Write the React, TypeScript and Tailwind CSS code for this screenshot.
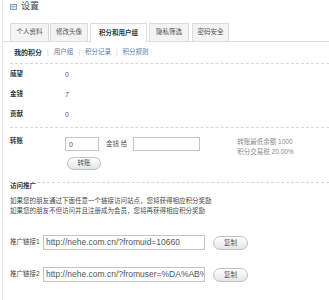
import { useState } from 'react'

const tabs = [
  { label: '个人资料', w: 'w-[39px]', ml: 'ml-0' },
  { label: '修改头像', w: 'w-[38px]', ml: 'ml-[1px]' },
  { label: '积分和用户组', w: 'w-[57px]', ml: 'ml-[2px]', active: true },
  { label: '隐私筛选', w: 'w-[40px]', ml: 'ml-[2px]' },
  { label: '密码安全', w: 'w-[37px]', ml: 'ml-[3px]' },
]

const subnav = ['我的积分', '用户组', '积分记录', '积分规则']

const stats = [
  { label: '威望', value: '0' },
  { label: '金钱', value: '7' },
  { label: '贡献', value: '0' },
]

function PillButton({ label, className }: { label: string; className: string }) {
  return (
    <button
      className={`rounded-full border border-[#c2c2c2] bg-linear-to-b from-white to-[#e4e4e4] text-[6.5px] leading-none text-[#555] ${className}`}
    >
      {label}
    </button>
  )
}

function TitleIcon() {
  return (
    <svg width="7" height="6" viewBox="0 0 7 6" className="block">
      <rect x="0.5" y="0.5" width="6" height="5" fill="#dfeaf6" stroke="#7f9fc6" />
      <line x1="1.5" y1="2.5" x2="5.5" y2="2.5" stroke="#9db6d6" />
      <line x1="1.5" y1="3.8" x2="4.5" y2="3.8" stroke="#b7c9e0" />
    </svg>
  )
}

export default function App() {
  const [amount, setAmount] = useState('0')
  const [target, setTarget] = useState('')

  return (
    <div className="h-[300px] w-[329px] overflow-hidden bg-white pl-[2px] font-['Liberation_Sans','Noto_Sans_CJK_SC',sans-serif] text-[#3a3a3a]">
      <div className="h-full border-l border-[#e6e6e6]">
        {/* title */}
        <div className="flex h-[13px] items-center pl-[7px]">
          <TitleIcon />
          <span className="ml-[4px] text-[9px] leading-none text-[#444]">设置</span>
        </div>

        {/* tabs */}
        <div className="mt-[10px] flex h-[19px] items-end border-b border-[#dcdcdc] pl-[7px]">
          {tabs.map((t) => (
            <div
              key={t.label}
              className={`${t.w} ${t.ml} flex items-center justify-center border-x border-t border-[#dcdcdc] text-[6.5px] leading-none ${
                t.active ? '-mb-px h-[19px] bg-white font-bold text-[#333]' : 'h-[18px] bg-[#f3f3f3] text-[#555]'
              }`}
            >
              {t.label}
            </div>
          ))}
        </div>

        <div className="pl-[7px]">
          {/* sub navigation */}
          <div className="flex h-[22px] items-center border-b border-dashed border-[#d6d6d6] pl-[4px] leading-none">
            {subnav.map((s, i) => (
              <div key={s} className="flex items-center">
                {i > 0 && <span className="mx-[5px] text-[6.5px] text-[#ccc]">|</span>}
                <span className={i === 0 ? 'text-[7px] font-bold text-[#333]' : 'text-[6.5px] text-[#5a7aa6]'}>{s}</span>
              </div>
            ))}
          </div>

          {/* stats */}
          <div className="h-[64px] border-b border-dashed border-[#d6d6d6]">
            {stats.map((s) => (
              <div key={s.label} className="flex h-[20px] items-center">
                <span className="w-[55px] text-[6.5px] font-bold leading-none">{s.label}</span>
                <span className="text-[7px] leading-none text-[#555]">{s.value}</span>
              </div>
            ))}
          </div>

          {/* transfer */}
          <div className="flex">
            <span className="mt-[10px] w-[55px] text-[6.5px] font-bold leading-none">转账</span>
            <div className="flex flex-col">
              <div className="mt-[9px] flex h-[14px] items-center">
                <input
                  value={amount}
                  onChange={(e) => setAmount(e.target.value)}
                  className="h-[14px] w-[34px] border border-[#c4c4c4] px-[3px] text-[7px] text-[#555] outline-none"
                />
                <span className="ml-[7px] text-[6.5px] leading-none text-[#555]">金钱 给</span>
                <input
                  value={target}
                  onChange={(e) => setTarget(e.target.value)}
                  className="ml-[6px] h-[14px] w-[67px] border border-[#c4c4c4] px-[3px] text-[7px] text-[#555] outline-none"
                />
              </div>
              <PillButton label="转账" className="ml-[2px] mt-[6px] h-[13px] w-[34px]" />
            </div>
            <div className="ml-[37px] mt-[9px] text-[6.5px] leading-[10px] text-[#8a8a8a]">
              <div>转账最低余额 1000</div>
              <div>积分交易税 20.00%</div>
            </div>
          </div>

          {/* promotion */}
          <div className="mt-[11px] flex h-[10px] items-center">
            <span className="text-[6.5px] font-bold leading-none">访问推广</span>
            <div className="ml-[1px] mb-[7px] flex-1 border-t border-dashed border-[#d6d6d6]" />
          </div>
          <div className="mt-[5px] text-[6.5px] leading-[10px] text-[#4a4a4a]">
            <div>如果您的朋友通过下面任意一个链接访问站点，您将获得相应积分奖励</div>
            <div>如果您的朋友不但访问并且注册成为会员，您将再获得相应积分奖励</div>
          </div>

          {[
            { label: '推广链接1', url: 'http://nehe.com.cn/?fromuid=10660', mt: 'mt-[18px]' },
            { label: '推广链接2', url: 'http://nehe.com.cn/?fromuser=%DA%AB%BA%C6%C7', mt: 'mt-[16px]' },
          ].map((l) => (
            <div key={l.label} className={`${l.mt} flex h-[16px] items-center`}>
              <span className="w-[33px] text-[6.5px] leading-none text-[#444]">{l.label}</span>
              <input
                readOnly
                value={l.url}
                className="h-[15px] w-[162px] border border-[#c4c4c4] pl-[2px] pr-0 text-[8.5px] text-[#555] outline-none"
              />
              <PillButton label="复制" className="ml-[8px] mt-[2px] h-[14px] w-[35px]" />
            </div>
          ))}
        </div>
      </div>
    </div>
  )
}
